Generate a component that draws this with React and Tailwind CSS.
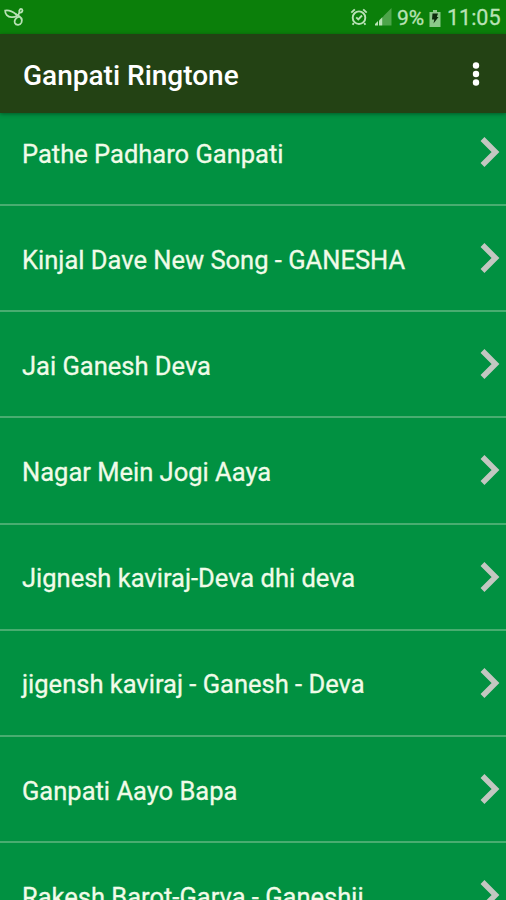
const songs = [
  'Pathe Padharo Ganpati',
  'Kinjal Dave New Song - GANESHA',
  'Jai Ganesh Deva',
  'Nagar Mein Jogi Aaya',
  'Jignesh kaviraj-Deva dhi deva',
  'jigensh kaviraj - Ganesh - Deva',
  'Ganpati Aayo Bapa',
  'Rakesh Barot-Garva - Ganeshji',
]

function StatusBar() {
  return (
    <div className="flex h-[34px] shrink-0 items-center bg-[#0b7f0a] pl-1 pr-[5px] text-[#b9e2b5]">
      <svg width="21" height="20" viewBox="0 0 21 20" fill="none" stroke="currentColor" strokeWidth="1.8" strokeLinecap="round">
        <path d="M12 7.300C8.500 4.500 4.500 3 1.200 3.600C1 7 3.500 10 7.500 10.200C11.500 10.400 14.500 8.500 15.500 5.500" />
        <path d="M15.500 5.500C14.500 3 16.500 1.200 18 2.300C19.300 3.800 17.800 6 15.500 5.500" />
        <path d="M12 7.300C16 9 18.800 12 17.500 15.500C16.200 18.500 12 18.500 10.800 15.800C10 13.500 11.500 11 14.500 10" />
      </svg>

      <div className="ml-auto flex items-center">
        <svg width="18" height="18" viewBox="0 0 18 18" fill="none" stroke="currentColor" strokeWidth="1.9">
          <circle cx="9" cy="9.700" r="6.300" />
          <path d="M1.300 4.600L4.800 1.400M16.700 4.600L13.200 1.400M3.800 15L2.600 16.800M14.200 15L15.400 16.800" />
          <path d="M6.200 9.300L8.300 11.400L12 7.500" />
        </svg>
        <svg className="ml-[6px]" width="18" height="18" viewBox="0 0 18 18">
          <path d="M1 17.500V16L4 13V17.500Z" fill="currentColor" />
          <path d="M5 17.500V12.500L8.500 9V17.500Z" fill="currentColor" />
          <path d="M9 17.500V8.500L17.500 0V17.500Z" fill="#4da54a" />
        </svg>
        <span className="ml-[5px] w-[28px] whitespace-nowrap pt-[2px] text-[21px] leading-none [-webkit-text-stroke:0.3px]">9%</span>
        <svg className="ml-[4px] mt-[2px]" width="12" height="17" viewBox="0 0 12 17">
          <path d="M4 0H8V2H11.500V17H0.500V2H4Z" fill="#8cc98a" />
          <path d="M3.500 3.500H9L7.800 7H9.500L4.500 13.500L5.300 9.500H3Z" fill="#0d2a0c" />
        </svg>
        <span className="ml-[6px] w-[54px] whitespace-nowrap pt-[2px] text-[21.500px] leading-none [-webkit-text-stroke:0.3px]">11:05</span>
      </div>
    </div>
  )
}

function AppBar() {
  return (
    <header className="z-10 flex h-[79px] shrink-0 items-center justify-between bg-[#234214] pl-[23px] pr-[26px] pt-[3px] shadow-[0_1px_4px_rgba(0,0,0,0.4)]">
      <h1 className="whitespace-nowrap pt-[2px] text-[28px] font-medium leading-none text-white">Ganpati Ringtone</h1>
      <button type="button" aria-label="More options" className="mb-[3px]">
        <svg width="8" height="26" viewBox="0 0 8 26" fill="white">
          <circle cx="4" cy="4.500" r="3.200" />
          <circle cx="4" cy="13" r="3.200" />
          <circle cx="4" cy="21.500" r="3.200" />
        </svg>
      </button>
    </header>
  )
}

function SongRow({ title }) {
  return (
    <li className="flex h-[106.125px] shrink-0 items-center justify-between border-b-2 border-[#48ad70] pl-[22px] pr-[6px]">
      <span className="whitespace-nowrap pt-[5px] text-[25.500px] leading-none text-[#f0fbe8] [-webkit-text-stroke:0.3px]">{title}</span>
      <svg width="20" height="32" viewBox="0 0 20 32" fill="none" stroke="#c3c7c1" strokeWidth="5.5">
        <path d="M2.500 3L15.500 16L2.500 29" />
      </svg>
    </li>
  )
}

function App() {
  return (
    <div className="flex h-screen flex-col overflow-hidden bg-[#019141] font-['Roboto',sans-serif]">
      <StatusBar />
      <AppBar />
      {/* first row is scrolled partly under the app bar */}
      <ul className="-mt-[13px] flex flex-col">
        {songs.map((title) => (
          <SongRow key={title} title={title} />
        ))}
      </ul>
    </div>
  )
}

export default App
